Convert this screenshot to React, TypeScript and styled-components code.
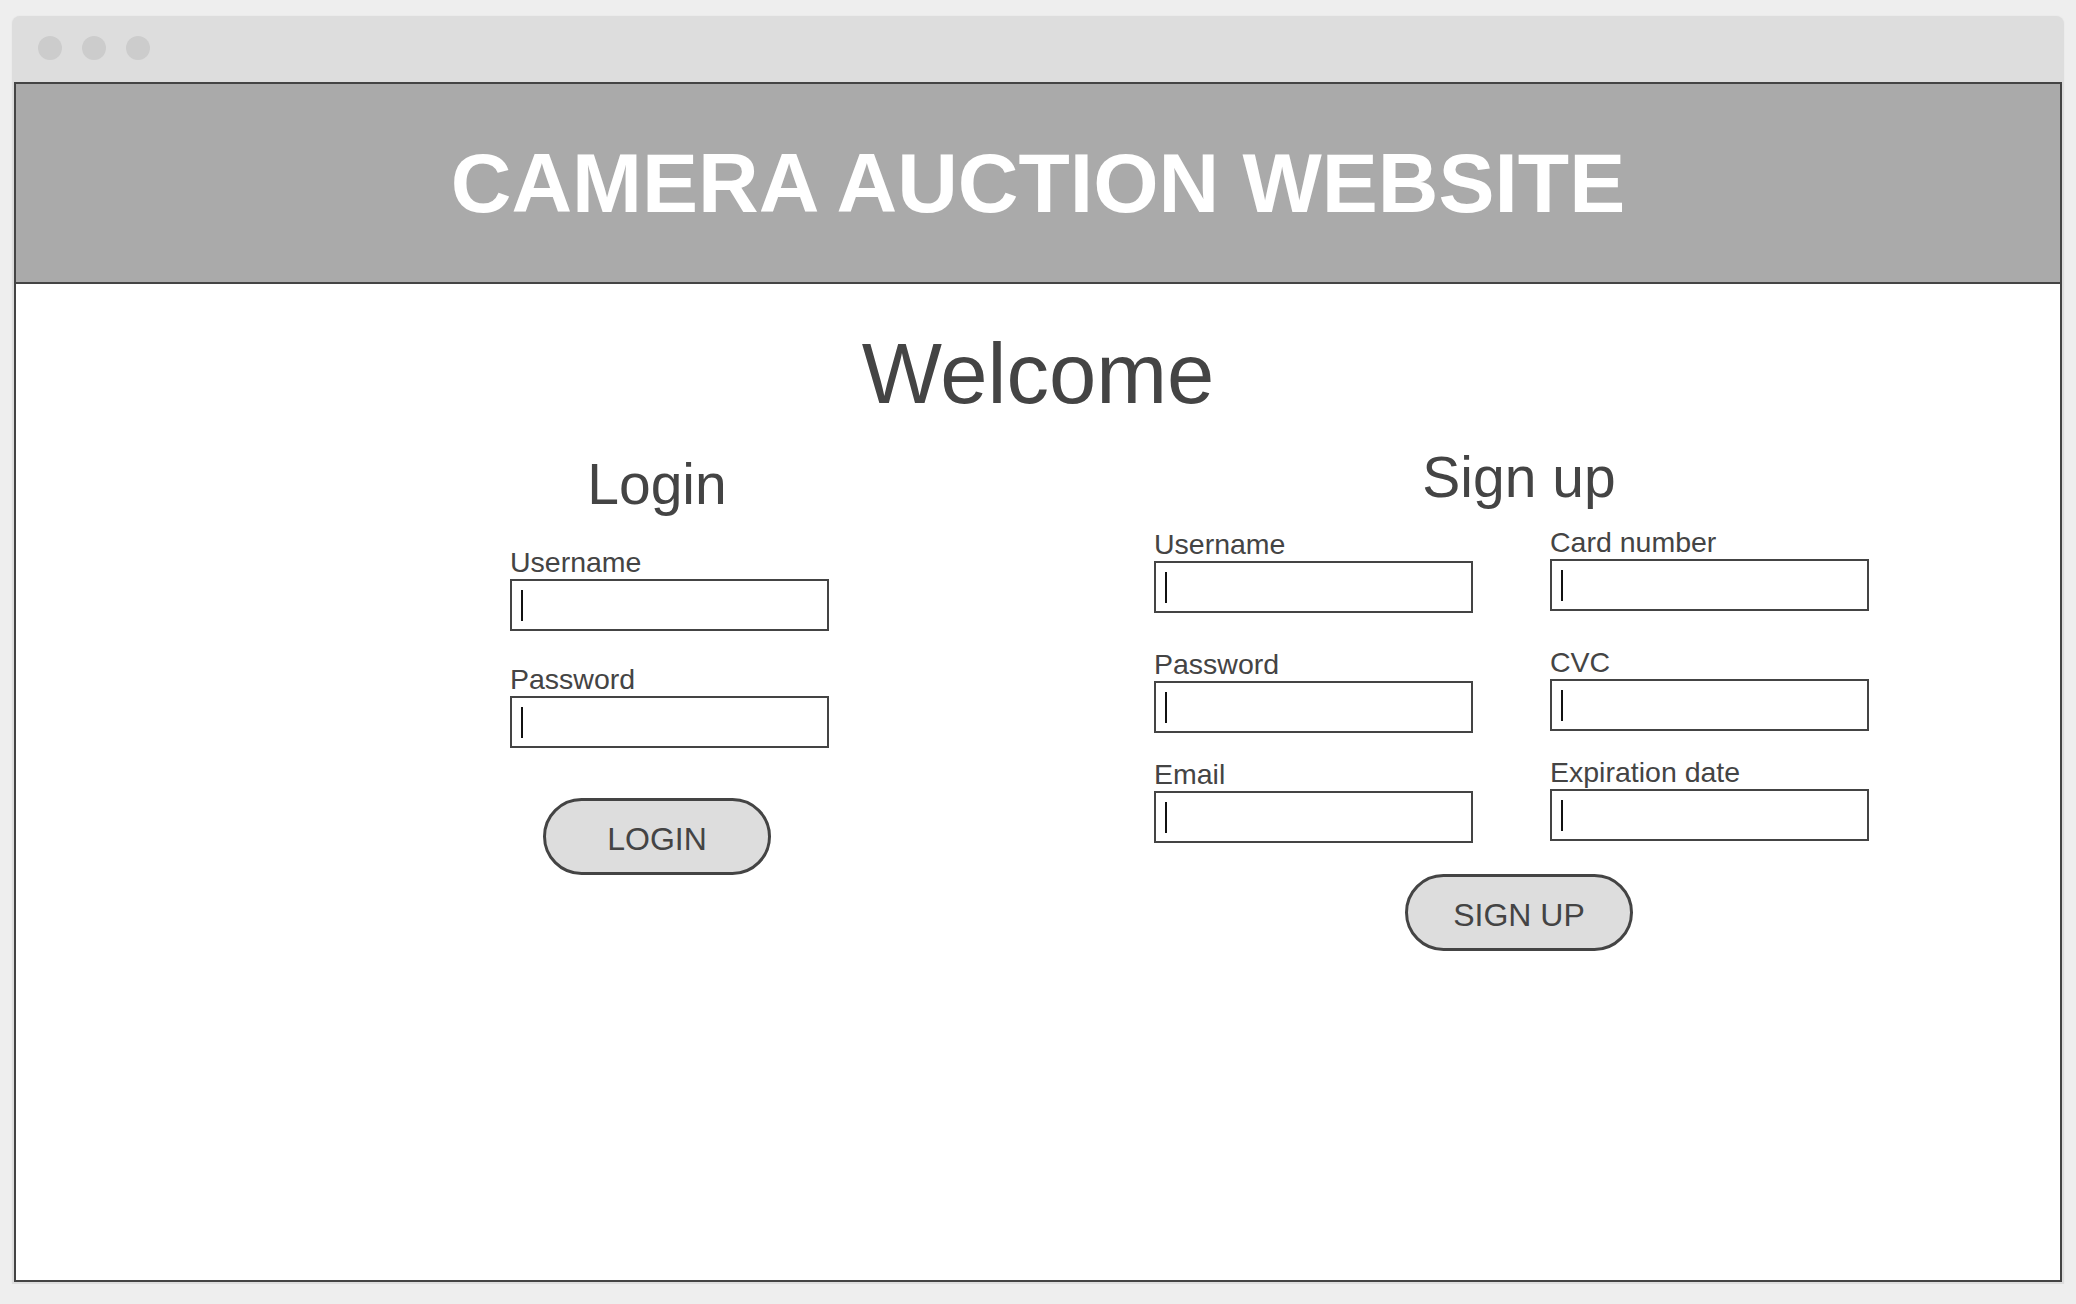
import styled, { createGlobalStyle } from 'styled-components';

const GlobalStyle = createGlobalStyle`
  html, body {
    margin: 0;
    padding: 0;
    background-color: #eeeeee;
  }
  body {
    font-family: 'Liberation Sans', Arial, sans-serif;
    color: #444444;
  }
`;

type FieldProps = {
  label: string;
  mt?: number;
};

function Field({ label, mt = 0 }: FieldProps) {
  return (
    <FieldWrap $mt={mt}>
      <Label>{label}</Label>
      <InputBox>
        <Caret />
      </InputBox>
    </FieldWrap>
  );
}

export default function App() {
  return (
    <>
      <GlobalStyle />
      <Window>
        <TitleBar>
          <Dot />
          <Dot />
          <Dot />
        </TitleBar>
        <Frame>
          <Header>
            <SiteTitle>CAMERA AUCTION WEBSITE</SiteTitle>
          </Header>
          <Main>
            <Welcome>Welcome</Welcome>
            <Forms>
              <LoginColumn>
                <SectionTitle>Login</SectionTitle>
                <LoginFields>
                  <Field label="Username" />
                  <Field label="Password" mt={34} />
                </LoginFields>
                <PillButton $mt={50}>LOGIN</PillButton>
              </LoginColumn>
              <SignupColumn>
                <SectionTitle>Sign up</SectionTitle>
                <SignupGrid>
                  <GridColumn>
                    <Field label="Username" />
                    <Field label="Password" mt={37} />
                    <Field label="Email" mt={27} />
                  </GridColumn>
                  <GridColumn $shift={-2}>
                    <Field label="Card number" />
                    <Field label="CVC" mt={37} />
                    <Field label="Expiration date" mt={27} />
                  </GridColumn>
                </SignupGrid>
                <PillButton $mt={31}>SIGN UP</PillButton>
              </SignupColumn>
            </Forms>
          </Main>
        </Frame>
      </Window>
    </>
  );
}

const Window = styled.div`
  margin: 16px 12px 0 12px;
  width: 2052px;
  height: 1268px;
  box-sizing: border-box;
  padding: 0 2px 2px 2px;
  background-color: #dddddd;
  border-radius: 8px 8px 0 0;
  display: flex;
  flex-direction: column;
  box-shadow: 0 0 2px rgba(0, 0, 0, 0.06);
`;

const TitleBar = styled.div`
  height: 66px;
  flex-shrink: 0;
  display: flex;
  align-items: flex-start;
  gap: 20px;
  padding: 20px 0 0 24px;
  box-sizing: border-box;
`;

const Dot = styled.span`
  width: 24px;
  height: 24px;
  border-radius: 50%;
  background-color: #cccccc;
`;

const Frame = styled.div`
  flex: 1;
  border: 2px solid #444444;
  background-color: #ffffff;
  display: flex;
  flex-direction: column;
`;

const Header = styled.header`
  height: 198px;
  background-color: #aaaaaa;
  border-bottom: 2px solid #444444;
  display: flex;
  align-items: center;
  justify-content: center;
`;

const SiteTitle = styled.h1`
  margin: 0;
  font-size: 84px;
  line-height: 1;
  font-weight: 700;
  color: #ffffff;
`;

const Main = styled.main`
  padding-top: 47px;
  display: flex;
  flex-direction: column;
`;

const Welcome = styled.h2`
  margin: 0;
  text-align: center;
  font-size: 85px;
  line-height: 1;
  font-weight: 400;
  color: #444444;
`;

const Forms = styled.div`
  margin-top: 33px;
  padding-left: 461px;
  display: flex;
  align-items: flex-start;
  gap: 282px;
`;

const LoginColumn = styled.section`
  width: 360px;
  padding-top: 7px;
  display: flex;
  flex-direction: column;
  align-items: center;
`;

const SignupColumn = styled.section`
  width: 800px;
  display: flex;
  flex-direction: column;
  align-items: center;
`;

const SectionTitle = styled.h3`
  margin: 0;
  font-size: 57px;
  line-height: 1;
  font-weight: 400;
  color: #444444;
`;

const LoginFields = styled.div`
  align-self: flex-start;
  margin: 35px 0 0 33px;
  display: flex;
  flex-direction: column;
`;

const SignupGrid = styled.div`
  margin: 24px 15px 0 0;
  display: grid;
  grid-template-columns: 319px 319px;
  column-gap: 77px;
`;

const GridColumn = styled.div<{ $shift?: number }>`
  display: flex;
  flex-direction: column;
  margin-top: ${({ $shift = 0 }) => $shift}px;
`;

const FieldWrap = styled.div<{ $mt: number }>`
  display: flex;
  flex-direction: column;
  gap: 3px;
  margin-top: ${({ $mt }) => $mt}px;
`;

const Label = styled.label`
  font-size: 28.5px;
  line-height: 28px;
  color: #444444;
`;

const InputBox = styled.div`
  width: 319px;
  height: 52px;
  box-sizing: border-box;
  border: 2px solid #444444;
  background-color: #ffffff;
  display: flex;
  align-items: center;
  padding-left: 9px;
`;

const Caret = styled.span`
  width: 2px;
  height: 31px;
  background-color: #111111;
`;

const PillButton = styled.button<{ $mt: number }>`
  margin-top: ${({ $mt }) => $mt}px;
  width: 228px;
  height: 77px;
  box-sizing: border-box;
  border: 3px solid #444444;
  border-radius: 39px;
  background-color: #dddddd;
  color: #444444;
  font-family: 'Liberation Sans', Arial, sans-serif;
  font-size: 32px;
  line-height: 1;
  padding: 4px 0 0 0;
  display: flex;
  align-items: center;
  justify-content: center;
  cursor: pointer;
`;
